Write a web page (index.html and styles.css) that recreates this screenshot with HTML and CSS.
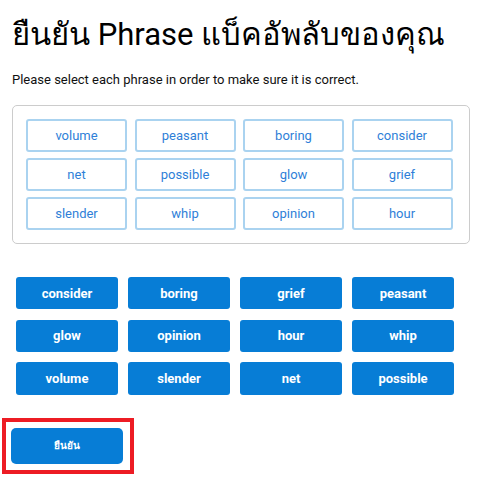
FILE: index.html
```html
<!DOCTYPE html>
<html lang="th">
<head>
<meta charset="utf-8">
<title>ยืนยัน Phrase</title>
<link rel="stylesheet" href="styles.css">
</head>
<body>
<main class="page">
  <h1 class="title">ยืนยัน Phrase แบ็คอัพลับของคุณ</h1>
  <p class="subtitle">Please select each phrase in order to make sure it is correct.</p>
  <section class="selected-box">
    <div class="word-grid">
      <button class="word-outline">volume</button>
      <button class="word-outline">peasant</button>
      <button class="word-outline">boring</button>
      <button class="word-outline">consider</button>
      <button class="word-outline">net</button>
      <button class="word-outline">possible</button>
      <button class="word-outline">glow</button>
      <button class="word-outline">grief</button>
      <button class="word-outline">slender</button>
      <button class="word-outline">whip</button>
      <button class="word-outline">opinion</button>
      <button class="word-outline">hour</button>
    </div>
  </section>
  <section class="choice-grid">
    <button class="word-filled">consider</button>
    <button class="word-filled">boring</button>
    <button class="word-filled">grief</button>
    <button class="word-filled">peasant</button>
    <button class="word-filled">glow</button>
    <button class="word-filled">opinion</button>
    <button class="word-filled">hour</button>
    <button class="word-filled">whip</button>
    <button class="word-filled">volume</button>
    <button class="word-filled">slender</button>
    <button class="word-filled">net</button>
    <button class="word-filled">possible</button>
  </section>
  <div class="confirm-wrap">
    <button class="confirm-btn">ยืนยัน</button>
  </div>
</main>
</body>
</html>
```

FILE: styles.css
```css
* { box-sizing: border-box; }
html, body { margin: 0; padding: 0; background: #ffffff; }
body {
  font-family: Roboto, "Noto Sans", "DejaVu Sans", sans-serif;
  color: #000;
}
.page {
  padding: 0 0 0 12px;
}
.title {
  margin: 0;
  padding-top: 16px;
  font-size: 31px;
  font-weight: 400;
  line-height: 38px;
  height: 70px;
}
.subtitle {
  margin: 0;
  font-size: 13px;
  line-height: 20px;
  height: 35px;
  color: #111;
}
.selected-box {
  width: 458px;
  border: 1px solid #cccccc;
  border-radius: 5px;
  padding: 13px 14px 13px 13px;
}
.word-grid {
  display: grid;
  grid-template-columns: repeat(4, 101px);
  column-gap: 7.5px;
  row-gap: 6.7px;
}
.word-outline {
  height: 32.5px;
  border: 2px solid #aad3f0;
  border-radius: 3px;
  background: #fff;
  color: #2f7fd8;
  font-family: Roboto, sans-serif;
  font-size: 13px;
  padding: 0;
}
.choice-grid {
  display: grid;
  grid-template-columns: repeat(4, 102px);
  column-gap: 10px;
  row-gap: 10.2px;
  margin: 33px 0 0 4px;
}
.word-filled {
  height: 32.5px;
  border: none;
  border-radius: 3px;
  background: #077dd6;
  color: #fff;
  font-family: Roboto, sans-serif;
  font-weight: 700;
  font-size: 13px;
  padding: 0;
}
.confirm-wrap {
  width: 132px;
  height: 56px;
  margin: 23px 0 0 -10px;
  border: 4px solid #ed1c24;
  padding: 6px 0 0 5px;
}
.confirm-btn {
  width: 112px;
  height: 36px;
  border: none;
  border-radius: 5px;
  background: #077dd6;
  color: #fff;
  font-family: Roboto, "Noto Sans", sans-serif;
  font-weight: 700;
  font-size: 10px;
  padding: 0;
}
```
